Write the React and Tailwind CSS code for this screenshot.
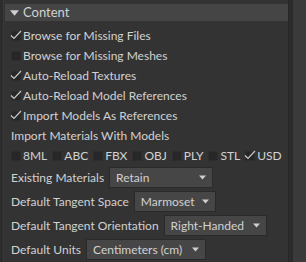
import React from "react";

const font = { fontFamily: 'Lato, "Noto Sans", sans-serif' };

function Check({ checked }) {
  return (
    <span className="relative inline-block w-[10px] h-[10px] shrink-0 bg-[#272727] border border-[#2d2d2d]">
      {checked && (
        <svg
          className="absolute left-[-2px] top-[-3px]"
          width="12"
          height="12"
          viewBox="0 0 12 12"
          fill="none"
          stroke="#cacaca"
          strokeWidth="1.2"
        >
          <path d="M1 6.5 L4 9.5 L11 2" />
        </svg>
      )}
    </span>
  );
}

function Arrow({ size = 7, color = "#cfcfcf" }) {
  return (
    <svg width={size} height={Math.ceil(size * 0.6)} viewBox="0 0 10 6" className="shrink-0">
      <path d="M0 0 L10 0 L5 6 Z" fill={color} />
    </svg>
  );
}

function CheckRow({ checked, label }) {
  return (
    <div className="flex items-center h-[20px] gap-[2px] whitespace-nowrap">
      <Check checked={checked} />
      <span>{label}</span>
    </div>
  );
}

function Select({ value, width }) {
  return (
    <div
      className={`flex items-center justify-between h-[21px] pl-[6px] pr-[6px] bg-[#464646] border border-[#2a2a2a] whitespace-nowrap ${width}`}
    >
      <span>{value}</span>
      <Arrow />
    </div>
  );
}

const formats = [
  ["8ML", false],
  ["ABC", false],
  ["FBX", false],
  ["OBJ", false],
  ["PLY", false],
  ["STL", false],
  ["USD", true],
];

export default function App() {
  return (
    <div
      className="flex w-[306px] h-[262px] bg-[#2c2c2c] text-[#d2d2d2] text-[12px] leading-none overflow-hidden"
      style={font}
    >
      <div className="w-[4px] border-r border-[#393939]" />
      <div className="flex-1 bg-[#333333] pt-[4px] pl-[1px]">
        <div className="flex items-center h-[17px] bg-[#454545] pl-[5px] gap-[4px] text-[13px]">
          <Arrow size={9} />
          <span>Content</span>
        </div>
        <div className="pl-[6px] pt-[5px]">
          <CheckRow checked label="Browse for Missing Files" />
          <CheckRow label="Browse for Missing Meshes" />
          <CheckRow checked label="Auto-Reload Textures" />
          <CheckRow checked label="Auto-Reload Model References" />
          <CheckRow checked label="Import Models As References" />
          <div className="flex items-center h-[20px]">Import Materials With Models</div>
          <div className="flex items-center h-[20px] gap-[5px]">
            {formats.map(([f, c]) => (
              <div key={f} className="flex items-center gap-[2px]">
                <Check checked={c} />
                <span>{f}</span>
              </div>
            ))}
          </div>
          <div className="flex flex-col gap-[3px] pt-[1px]">
            <div className="flex items-center gap-[5px] whitespace-nowrap">
              <span>Existing Materials</span>
              <Select value="Retain" width="w-[104px]" />
            </div>
            <div className="flex items-center gap-[5px] whitespace-nowrap">
              <span>Default Tangent Space</span>
              <Select value="Marmoset" width="w-[82px]" />
            </div>
            <div className="flex items-center gap-[5px] whitespace-nowrap">
              <span>Default Tangent Orientation</span>
              <Select value="Right-Handed" width="w-[103px]" />
            </div>
            <div className="flex items-center gap-[5px] whitespace-nowrap">
              <span>Default Units</span>
              <Select value="Centimeters (cm)" width="w-[120px]" />
            </div>
          </div>
        </div>
      </div>
      <div className="w-[5px] bg-[#2b2b2b] border-l border-[#262626]" />
      <div className="w-[13px] bg-[#3a3a3a]" />
    </div>
  );
}
